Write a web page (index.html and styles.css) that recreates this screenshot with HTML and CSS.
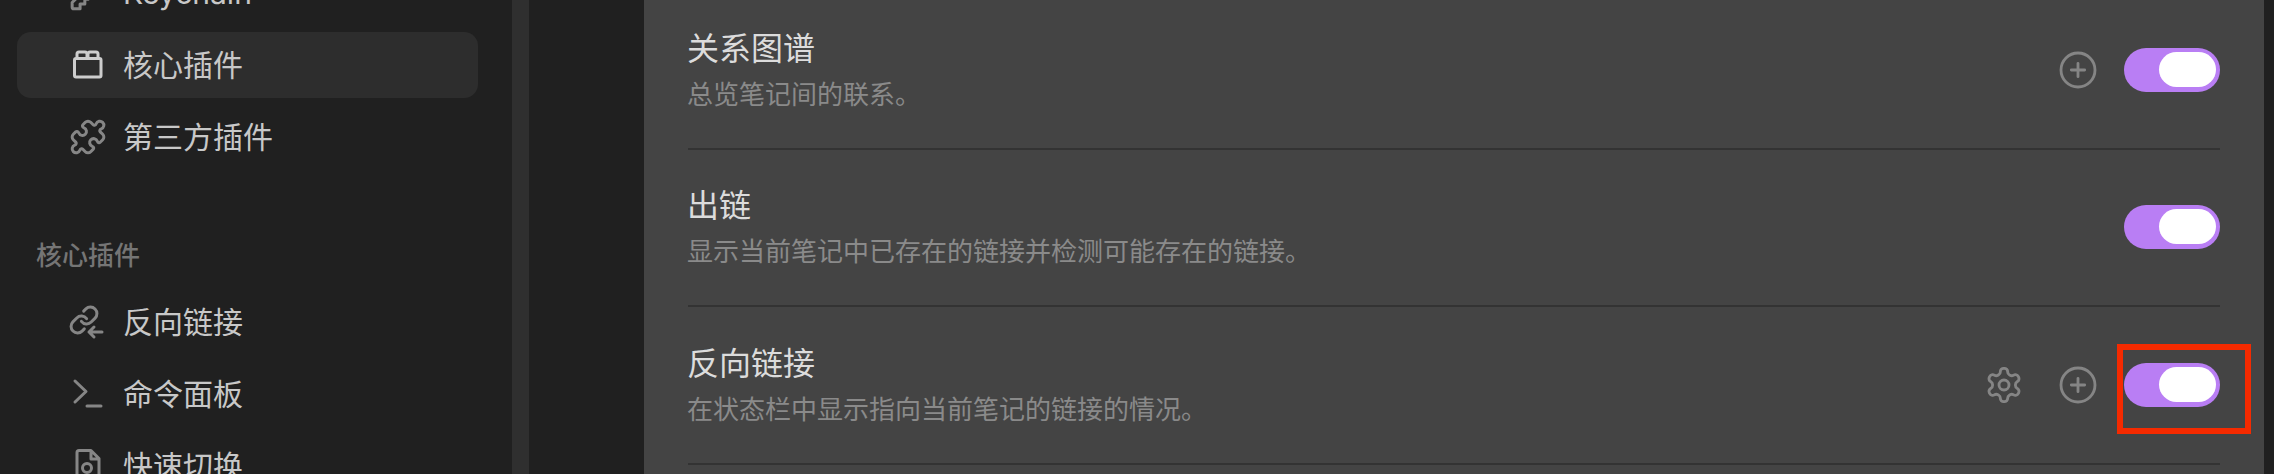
FILE: index.html
```html
<!DOCTYPE html>
<html lang="zh-CN">
<head>
<meta charset="utf-8">
<title>核心插件</title>
<link rel="stylesheet" href="styles.css">
</head>
<body>
<div class="app">
  <nav class="sidebar">
    <div class="nav-item">
      <span class="nav-icon"><svg class="icon" viewBox="0 0 24 24"><path d="M2 18v3c0 .6.4 1 1 1h4v-3h3v-3h2l1.4-1.4a6.5 6.5 0 1 0-4-4Z"/><circle cx="16.5" cy="7.5" r=".5"/></svg></span>
      <span>Keychain</span>
    </div>
    <div class="nav-item active">
      <span class="nav-icon"><svg class="icon-px" viewBox="0 0 36 36"><path d="M8 11V7a2 2 0 0 1 2-2h6a2 2 0 0 1 2 2v4M19 11V7a2 2 0 0 1 2-2h6a2 2 0 0 1 2 2v4"/><rect x="5.500" y="11.500" width="26.500" height="18.500" rx="1.500"/></svg></span>
      <span>核心插件</span>
    </div>
    <div class="nav-item">
      <span class="nav-icon"><svg class="icon" viewBox="0 0 24 24"><path d="M19.439 7.85c-.049.322.059.648.289.878l1.568 1.568c.47.47.706 1.087.706 1.704s-.235 1.233-.706 1.704l-1.611 1.611a.98.98 0 0 1-.837.276c-.47-.07-.802-.48-.968-.925a2.501 2.501 0 1 0-3.214 3.214c.446.166.855.497.925.968a.979.979 0 0 1-.276.837l-1.61 1.61a2.404 2.404 0 0 1-1.705.707 2.402 2.402 0 0 1-1.704-.706l-1.568-1.568a1.026 1.026 0 0 0-.877-.29c-.493.074-.84.504-1.02.968a2.5 2.5 0 1 1-3.237-3.237c.464-.18.894-.527.967-1.02a1.026 1.026 0 0 0-.289-.877l-1.568-1.568A2.402 2.402 0 0 1 1.998 12c0-.617.236-1.234.706-1.704L4.23 8.77c.24-.24.581-.353.917-.303.515.077.877.528 1.073 1.01a2.5 2.5 0 1 0 3.259-3.259c-.482-.196-.933-.558-1.01-1.073-.05-.336.062-.676.303-.917l1.525-1.525A2.402 2.402 0 0 1 12 1.998c.617 0 1.234.236 1.704.706l1.568 1.568c.23.23.556.338.877.29.493-.074.84-.504 1.02-.968a2.5 2.5 0 1 1 3.237 3.237c-.464.18-.894.527-.967 1.02Z"/></svg></span>
      <span>第三方插件</span>
    </div>
    <div class="nav-heading">核心插件</div>
    <div class="nav-item">
      <span class="nav-icon"><svg class="icon-px" viewBox="0 0 36 36"><g transform="translate(-.6 .4) scale(1.3)" class="thin"><path d="M10 13a5 5 0 0 0 7.540.54l3-3a5 5 0 0 0-7.070-7.070l-1.720 1.710"/><path d="M14 11a5 5 0 0 0-7.540-.54l-3 3a5 5 0 0 0 7.070 7.070l1.710-1.710"/></g><path d="M33 28H20M25 23l-5 5 5 5"/></svg></span>
      <span>反向链接</span>
    </div>
    <div class="nav-item">
      <span class="nav-icon"><svg class="icon-px" viewBox="0 0 36 36"><path d="M6 5l11 10.500L6 26M18 30h14"/></svg></span>
      <span>命令面板</span>
    </div>
    <div class="nav-item">
      <span class="nav-icon"><svg class="icon-px" viewBox="0 0 36 36"><path d="M8 34V4.500a2 2 0 0 1 2-2h12l8 8V34M22 3v8h8"/><circle cx="18" cy="20" r="4.500"/></svg></span>
      <span>快速切换</span>
    </div>
  </nav>
  <div class="strip"></div>
  <div class="gutter"></div>
  <main class="content">
    <section class="row">
      <div class="info">
        <div class="title">关系图谱</div>
        <div class="desc">总览笔记间的联系。</div>
      </div>
      <div class="controls">
        <svg class="btn-icon" viewBox="0 0 24 24"><circle cx="12" cy="12" r="10.200"/><path d="M12 8v8M8 12h8"/></svg>
        <div class="toggle"><span class="knob"></span></div>
      </div>
    </section>
    <section class="row">
      <div class="info">
        <div class="title">出链</div>
        <div class="desc">显示当前笔记中已存在的链接并检测可能存在的链接。</div>
      </div>
      <div class="controls">
        <div class="toggle"><span class="knob"></span></div>
      </div>
    </section>
    <section class="row">
      <div class="info">
        <div class="title">反向链接</div>
        <div class="desc">在状态栏中显示指向当前笔记的链接的情况。</div>
      </div>
      <div class="controls">
        <svg class="btn-icon gear" viewBox="0 0 24 24"><path d="M12.220 2h-.44a2 2 0 0 0-2 2v.18a2 2 0 0 1-1 1.730l-.43.25a2 2 0 0 1-2 0l-.15-.08a2 2 0 0 0-2.730.73l-.22.38a2 2 0 0 0 .73 2.730l.15.1a2 2 0 0 1 1 1.720v.51a2 2 0 0 1-1 1.740l-.15.09a2 2 0 0 0-.73 2.730l.22.38a2 2 0 0 0 2.730.73l.15-.08a2 2 0 0 1 2 0l.43.25a2 2 0 0 1 1 1.730V20a2 2 0 0 0 2 2h.44a2 2 0 0 0 2-2v-.18a2 2 0 0 1 1-1.730l.43-.25a2 2 0 0 1 2 0l.15.08a2 2 0 0 0 2.730-.73l.22-.39a2 2 0 0 0-.73-2.730l-.15-.08a2 2 0 0 1-1-1.740v-.5a2 2 0 0 1 1-1.740l.15-.09a2 2 0 0 0 .73-2.730l-.22-.38a2 2 0 0 0-2.730-.73l-.15.08a2 2 0 0 1-2 0l-.43-.25a2 2 0 0 1-1-1.730V4a2 2 0 0 0-2-2z"/><circle cx="12" cy="12" r="3"/></svg>
        <svg class="btn-icon" viewBox="0 0 24 24"><circle cx="12" cy="12" r="10.200"/><path d="M12 8v8M8 12h8"/></svg>
        <div class="toggle marked"><span class="knob"></span></div>
      </div>
    </section>
  </main>
  <div class="edge"></div>
</div>
</body>
</html>
```

FILE: styles.css
```css
*, *::before, *::after { box-sizing: border-box; }

html, body {
  margin: 0;
  height: 100%;
  overflow: hidden;
  background: #202020;
}

body {
  font-family: "Inter", "Noto Sans CJK SC", sans-serif;
}

.app {
  display: grid;
  grid-template-columns: 512px 17px 115px 1620px 10px;
  height: 474px;
  overflow: hidden;
}

.sidebar {
  background: #202020;
  padding: 0 34px 0 17px;
  margin-top: -40px;
  color: #c8c8c8;
  font-size: 30px;
}

.nav-item {
  display: flex;
  align-items: center;
  height: 66px;
  margin-bottom: 6px;
  padding-left: 52px;
  border-radius: 14px;
  line-height: 40px;
  white-space: nowrap;
}

.nav-item.active {
  background: #2d2d2d;
  margin-top: 1px;
}

.nav-icon {
  display: flex;
  width: 54px;
  flex: none;
}

.icon,
.icon-px {
  width: 38px;
  height: 38px;
  fill: none;
  stroke: #868686;
  stroke-width: 1.9;
  stroke-linecap: round;
  stroke-linejoin: round;
}

.icon-px {
  width: 36px;
  height: 36px;
  stroke-width: 3;
}

.icon-px .thin {
  stroke-width: 2.3;
}

.active .icon-px {
  stroke: #cdcdcd;
}

.nav-heading {
  margin: 68px 0 15px 19px;
  font-size: 26px;
  line-height: 36px;
  font-weight: 500;
  color: #757575;
}

.strip {
  background: #2f2f2f;
}

.gutter,
.edge {
  background: #202020;
}

.content {
  background: #444444;
  padding: 0 44px;
  margin-top: -8px;
}

.row {
  display: flex;
  align-items: center;
  justify-content: space-between;
  height: 157.5px;
  border-bottom: 2px solid #333333;
}

.info {
  margin-left: -1px;
}

.title {
  padding-top: 2px;
  font-size: 32px;
  line-height: 40px;
  color: #dcdcdc;
}

.desc {
  margin-top: 8px;
  font-size: 26px;
  line-height: 36px;
  color: #8a8a8a;
}

.controls {
  display: flex;
  align-items: center;
  gap: 26px;
}

.btn-icon {
  width: 40px;
  height: 40px;
  fill: none;
  stroke: #858585;
  stroke-width: 1.7;
  stroke-linecap: round;
  stroke-linejoin: round;
}

.gear {
  margin-right: 8.500px;
}

.toggle {
  position: relative;
  display: flex;
  justify-content: flex-end;
  width: 96px;
  height: 44px;
  padding: 4px 4px 5px;
  border-radius: 22px;
  background: #b97ef4;
}

.knob {
  width: 57px;
  height: 35px;
  border-radius: 18px;
  background: #ffffff;
}

.marked::after {
  content: "";
  position: absolute;
  top: -19px;
  left: -7px;
  width: 134px;
  height: 90px;
  border: 6px solid #f52a00;
}
```
